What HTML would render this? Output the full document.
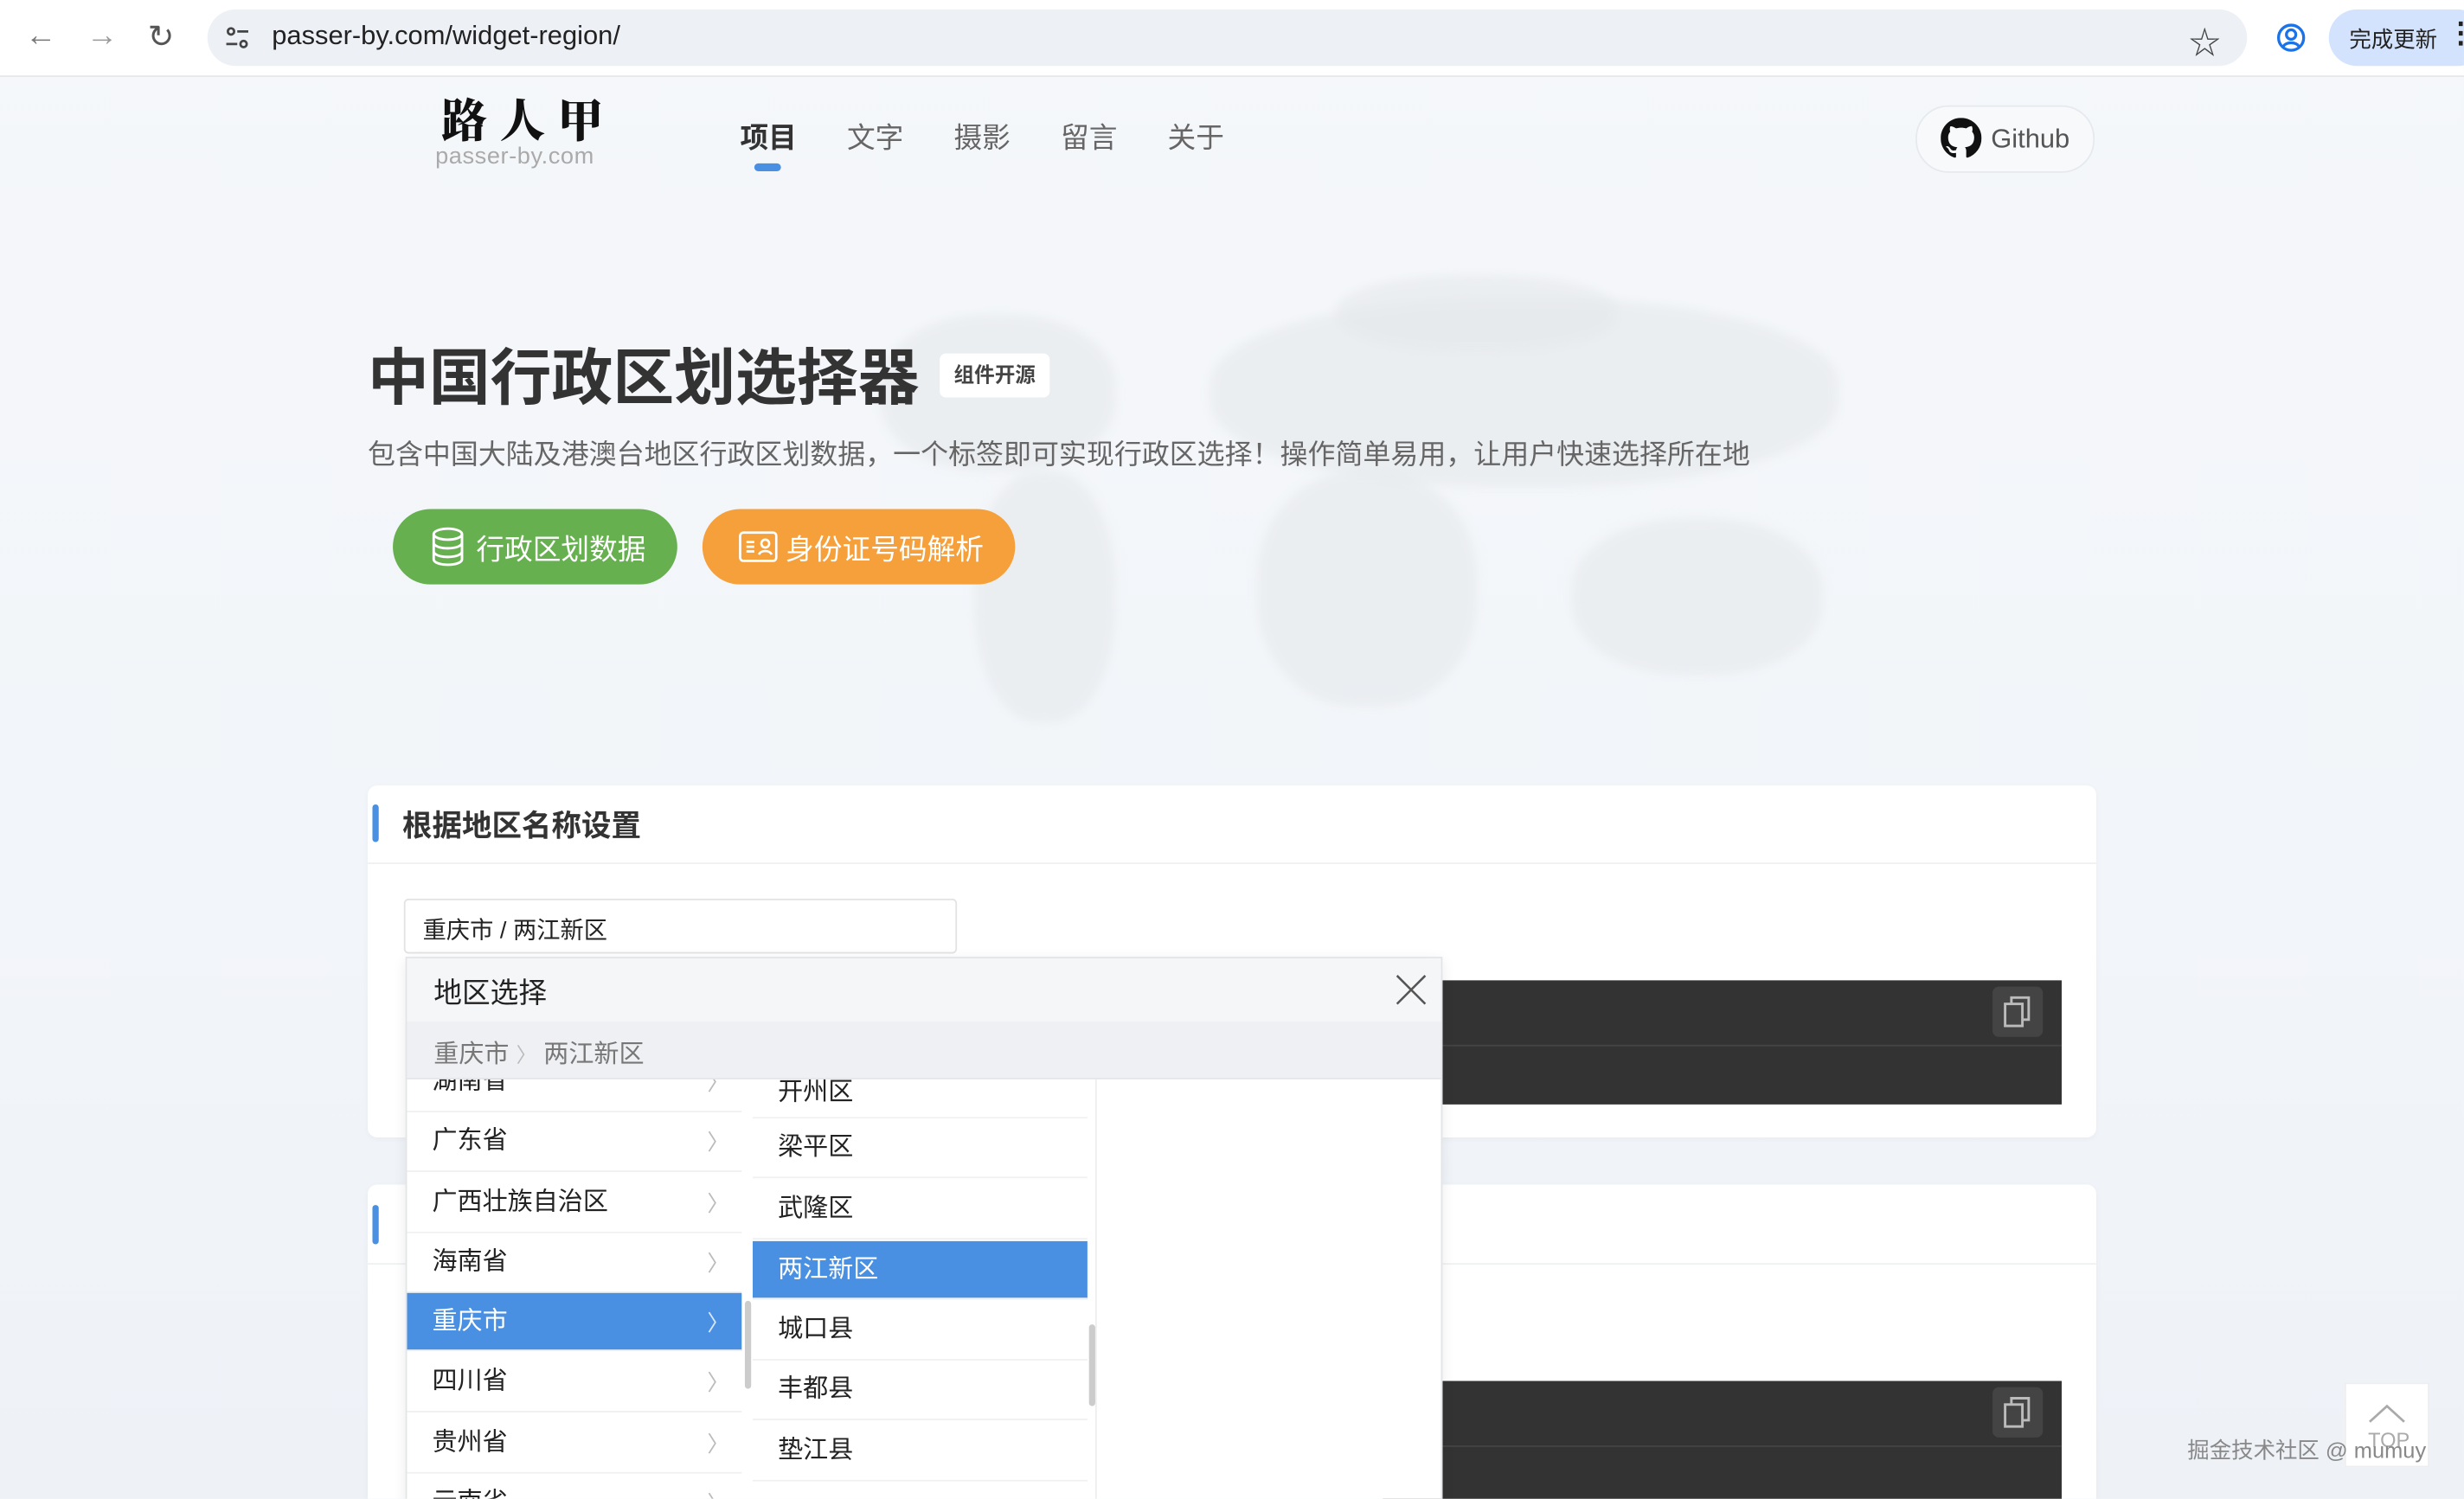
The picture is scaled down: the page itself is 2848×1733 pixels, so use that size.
<!DOCTYPE html>
<html><head><meta charset="utf-8">
<style>
html,body{margin:0;padding:0;width:2848px;height:1732px;overflow:hidden;background:#f3f6fa}
#w{position:absolute;left:0;top:0;width:1568px;height:954px;transform:scale(1.8163);transform-origin:0 0;overflow:hidden;font-family:"Liberation Sans","Noto Sans CJK SC",sans-serif;color:#333;background:linear-gradient(180deg,#f5f7fa 0%,#f2f5f9 60%,#eef2f7 100%)}
.a{position:absolute}
.bar{left:0;top:0;width:1568px;height:48px;background:#fff;border-bottom:1px solid #e6e8eb}
.url{left:132px;top:6px;width:1298px;height:36px;border-radius:18px;background:#edf1f6}
.nav{top:74px;font-size:18px;color:#666}
.blob{background:#e6e9ec;border-radius:45%;filter:blur(3px);opacity:.6}
.card{background:#fff;border-radius:6px;box-shadow:0 1px 4px rgba(0,0,0,.04)}
.row{position:absolute;left:0;width:213px;height:38px;border-bottom:1px solid #f0f0f0;font-size:16px;line-height:38px;padding-left:16px;box-sizing:border-box;color:#222;background:#fff}
.row .ch{position:absolute;right:8px;top:0;color:#bbb;font-size:14px}
.sel{background:#4a90e2;color:#fff}
.sel .ch{color:#dbe8f8}
</style></head><body><div id="w">
<div class="a bar"></div>
<div class="a" style="left:16px;top:12px;font-size:20px;color:#777">&#8592;</div>
<div class="a" style="left:55px;top:12px;font-size:20px;color:#999">&#8594;</div>
<div class="a" style="left:94px;top:11px;font-size:20px;color:#555">&#8635;</div>
<div class="a url"></div>
<svg class="a" style="left:142px;top:15px" width="18" height="18" viewBox="0 0 18 18"><circle cx="5" cy="5" r="2" fill="none" stroke="#444" stroke-width="1.5"/><line x1="9" y1="5" x2="16" y2="5" stroke="#444" stroke-width="1.5"/><circle cx="13" cy="13" r="2" fill="none" stroke="#444" stroke-width="1.5"/><line x1="2" y1="13" x2="9" y2="13" stroke="#444" stroke-width="1.5"/></svg>
<div class="a" style="left:173px;top:13px;font-size:17px;color:#222">passer-by.com/widget-region/</div>
<div class="a" style="left:1393px;top:11px;font-size:20px;color:#444">&#9734;</div>
<svg class="a" style="left:1448px;top:14px" width="20" height="20" viewBox="0 0 20 20"><circle cx="10" cy="10" r="8" fill="none" stroke="#1a73e8" stroke-width="1.8"/><circle cx="10" cy="8" r="3" fill="none" stroke="#1a73e8" stroke-width="1.8"/><path d="M5 15.5c2-3 8-3 10 0" fill="none" stroke="#1a73e8" stroke-width="1.8"/></svg>
<div class="a" style="left:1482px;top:6px;width:100px;height:36px;border-radius:18px;background:#d3e3fd"></div>
<div class="a" style="left:1495px;top:15px;font-size:14px;color:#222">完成更新</div>
<div class="a" style="left:1557px;top:11px;font-size:18px;color:#222;font-weight:bold">&#8942;</div>

<div class="a blob" style="left:560px;top:200px;width:150px;height:100px"></div>
<div class="a blob" style="left:620px;top:300px;width:90px;height:160px"></div>
<div class="a blob" style="left:770px;top:190px;width:400px;height:120px"></div>
<div class="a blob" style="left:800px;top:300px;width:140px;height:150px"></div>
<div class="a blob" style="left:1000px;top:330px;width:160px;height:100px"></div>
<div class="a blob" style="left:850px;top:175px;width:180px;height:50px"></div>

<div class="a" style="left:281px;top:58px;font-size:29px;font-weight:900;color:#111;letter-spacing:8px;font-family:'Noto Serif CJK SC',serif;line-height:36px">路人甲</div>
<div class="a" style="left:277px;top:91px;font-size:15px;color:#aaa;letter-spacing:.3px;line-height:18px">passer-by.com</div>
<div class="a nav" style="left:471px;color:#333;font-weight:bold">项目</div>
<div class="a" style="left:480px;top:104px;width:17px;height:5px;border-radius:3px;background:#4a90e2"></div>
<div class="a nav" style="left:539px">文字</div>
<div class="a nav" style="left:607px">摄影</div>
<div class="a nav" style="left:675px">留言</div>
<div class="a nav" style="left:743px">关于</div>
<div class="a" style="left:1219px;top:67px;width:112px;height:41px;border-radius:21px;border:1px solid #e6e9ee;background:#f7f9fb"></div>
<svg class="a" style="left:1235px;top:75px" width="26" height="26" viewBox="0 0 16 16"><path fill="#111" d="M8 0C3.58 0 0 3.58 0 8c0 3.540 2.29 6.53 5.47 7.59.4.07.55-.17.55-.38 0-.19-.01-.82-.01-1.49-2.01.37-2.530-.49-2.690-.94-.09-.23-.48-.94-.82-1.13-.28-.15-.68-.52-.01-.53.63-.01 1.08.58 1.23.82.72 1.21 1.87.87 2.33.66.07-.52.28-.87.51-1.07-1.78-.2-3.64-.89-3.64-3.950 0-.87.31-1.59.82-2.150-.08-.2-.36-1.02.08-2.12 0 0 .67-.21 2.2.82.64-.18 1.32-.27 2-.27.68 0 1.36.09 2 .27 1.53-1.04 2.2-.82 2.2-.82.44 1.1.16 1.92.08 2.12.51.56.82 1.27.82 2.15 0 3.07-1.87 3.75-3.65 3.95.29.25.54.73.54 1.48 0 1.07-.01 1.93-.01 2.2 0 .21.15.46.55.38A8.013 8.013 0 0016 8c0-4.42-3.58-8-8-8z"/></svg>
<div class="a" style="left:1267px;top:79px;font-size:17px;color:#555">Github</div>

<div class="a" style="left:234px;top:210px;font-size:39px;font-weight:bold;color:#333;letter-spacing:0">中国行政区划选择器</div>
<div class="a" style="left:598px;top:225px;width:70px;height:28px;background:#fff;border-radius:4px;font-size:13px;font-weight:bold;line-height:28px;text-align:center;color:#444">组件开源</div>
<div class="a" style="left:234px;top:276px;font-size:17.6px;color:#666">包含中国大陆及港澳台地区行政区划数据，一个标签即可实现行政区选择！操作简单易用，让用户快速选择所在地</div>
<div class="a" style="left:250px;top:324px;width:181px;height:48px;border-radius:24px;background:#66b050"></div>
<svg class="a" style="left:274px;top:335px" width="22" height="26" viewBox="0 0 22 26" fill="none" stroke="#fff" stroke-width="1.6"><ellipse cx="11" cy="5" rx="9" ry="3.5"/><path d="M2 5v16c0 2 4 3.5 9 3.5s9-1.5 9-3.5V5M2 10.5c0 2 4 3.5 9 3.5s9-1.5 9-3.5M2 16c0 2 4 3.5 9 3.5s9-1.5 9-3.5"/></svg>
<div class="a" style="left:303px;top:336px;font-size:18px;color:#fff">行政区划数据</div>
<div class="a" style="left:447px;top:324px;width:199px;height:48px;border-radius:24px;background:#f5a03a"></div>
<svg class="a" style="left:470px;top:338px" width="25" height="20" viewBox="0 0 25 20" fill="none" stroke="#fff" stroke-width="1.5"><rect x="1" y="1" width="23" height="18" rx="2"/><path d="M5 7h5M5 10h5M5 13h5"/><circle cx="17" cy="8" r="2.5"/><path d="M13 15c1-3 7-3 8 0"/></svg>
<div class="a" style="left:500px;top:336px;font-size:18px;color:#fff">身份证号码解析</div>

<div class="a card" style="left:234px;top:500px;width:1100px;height:224px"></div>
<div class="a" style="left:237px;top:512px;width:4px;height:24px;background:#4a90e2;border-radius:2px"></div>
<div class="a" style="left:256px;top:511px;font-size:19px;font-weight:bold;color:#333">根据地区名称设置</div>
<div class="a" style="left:234px;top:549px;width:1100px;height:1px;background:#eef0f2"></div>
<div class="a" style="left:257px;top:572px;width:350px;height:33px;border:1px solid #e3e3e3;border-radius:3px;background:#fff"></div>
<div class="a" style="left:269px;top:581px;font-size:15px;color:#222">重庆市 / 两江新区</div>
<div class="a" style="left:880px;top:624px;width:432px;height:79px;background:#333"></div>
<div class="a" style="left:880px;top:665px;width:432px;height:1px;background:#444"></div>
<div class="a" style="left:1268px;top:628px;width:32px;height:32px;border-radius:4px;background:#444"></div>
<svg class="a" style="left:1274px;top:633px" width="20" height="22" viewBox="0 0 20 22" fill="none" stroke="#bbb" stroke-width="1.6"><rect x="2" y="6" width="11" height="14"/><path d="M6 6V2h11v14h-4"/></svg>

<div class="a card" style="left:234px;top:754px;width:1100px;height:220px"></div>
<div class="a" style="left:237px;top:767px;width:4px;height:25px;background:#4a90e2;border-radius:2px"></div>
<div class="a" style="left:234px;top:804px;width:1100px;height:1px;background:#eef0f2"></div>
<div class="a" style="left:880px;top:879px;width:432px;height:80px;background:#333"></div>
<div class="a" style="left:880px;top:920px;width:432px;height:1px;background:#444"></div>
<div class="a" style="left:1268px;top:883px;width:32px;height:32px;border-radius:4px;background:#444"></div>
<svg class="a" style="left:1274px;top:888px" width="20" height="22" viewBox="0 0 20 22" fill="none" stroke="#bbb" stroke-width="1.6"><rect x="2" y="6" width="11" height="14"/><path d="M6 6V2h11v14h-4"/></svg>

<div class="a" style="left:258px;top:609px;width:660px;height:360px;background:#fff;border:1px solid #e2e4e7;box-sizing:border-box;box-shadow:0 2px 8px rgba(0,0,0,.08)"></div>
<div class="a" style="left:259px;top:686px;width:214px;height:270px;overflow:hidden">
<div class="row" style="top:-16px">湖南省<span class="ch">〉</span></div>
<div class="row" style="top:22px">广东省<span class="ch">〉</span></div>
<div class="row" style="top:61px">广西壮族自治区<span class="ch">〉</span></div>
<div class="row" style="top:99px">海南省<span class="ch">〉</span></div>
<div class="row sel" style="top:137px;height:37px">重庆市<span class="ch">〉</span></div>
<div class="row" style="top:175px">四川省<span class="ch">〉</span></div>
<div class="row" style="top:214px">贵州省<span class="ch">〉</span></div>
<div class="row" style="top:252px">云南省<span class="ch">〉</span></div>
</div>
<div class="a" style="left:474px;top:828px;width:4px;height:56px;background:#ccc;border-radius:2px"></div>
<div class="a" style="left:479px;top:686px;width:214px;height:270px;overflow:hidden">
<div class="row" style="top:-12px;padding-top:6px;line-height:32px">开州区</div>
<div class="row" style="top:26px">梁平区</div>
<div class="row" style="top:65px">武隆区</div>
<div class="row sel" style="top:104px;height:37px">两江新区</div>
<div class="row" style="top:142px">城口县</div>
<div class="row" style="top:180px">丰都县</div>
<div class="row" style="top:219px">垫江县</div>
<div class="row" style="top:257px"></div>
</div>
<div class="a" style="left:693px;top:843px;width:4px;height:52px;background:#ccc;border-radius:2px"></div>
<div class="a" style="left:697px;top:686px;width:1px;height:270px;background:#eee"></div>
<div class="a" style="left:259px;top:610px;width:658px;height:40px;background:#f5f6f8"></div>
<div class="a" style="left:276px;top:618px;font-size:18px;color:#222">地区选择</div>
<svg class="a" style="left:887px;top:619px" width="22" height="22" viewBox="0 0 22 22" stroke="#555" stroke-width="1.4"><path d="M2 2L20 20M20 2L2 20"/></svg>
<div class="a" style="left:259px;top:650px;width:658px;height:36px;background:#eef0f3;border-bottom:1px solid #e4e6e9"></div>
<div class="a" style="left:276px;top:657px;font-size:16px;color:#777">重庆市 <span style="color:#bbb;font-size:13px">〉</span> 两江新区</div>

<div class="a" style="left:1492px;top:880px;width:54px;height:54px;background:#fff;border:1px solid #eee;box-sizing:border-box"></div>
<svg class="a" style="left:1506px;top:893px" width="26" height="14" viewBox="0 0 26 14" fill="none" stroke="#aaa" stroke-width="1.5"><path d="M2 12L13 2L24 12"/></svg>
<div class="a" style="left:1507px;top:909px;font-size:13px;color:#aaa">TOP</div>
<div class="a" style="left:1392px;top:913px;font-size:14px;color:#888">掘金技术社区 @ mumuy</div>
</div></body></html>
